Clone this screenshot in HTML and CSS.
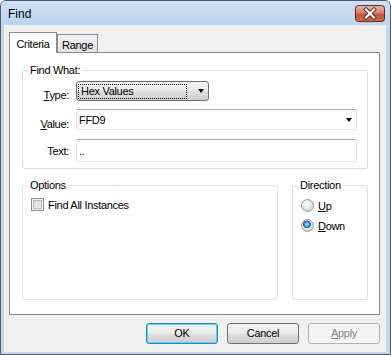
FILE: index.html
```html
<!DOCTYPE html>
<html>
<head>
<meta charset="utf-8">
<link rel="stylesheet" href="styles.css">
</head>
<body>
<div class="window">
  <div class="titlebar">
    <span class="title">Find</span>
    <span class="close">
      <svg width="30" height="17" viewBox="0 0 30 17">
        <defs>
          <linearGradient id="cg" x1="0" y1="0" x2="0" y2="1">
            <stop offset="0" stop-color="#eab2a4"/>
            <stop offset="0.45" stop-color="#d7826d"/>
            <stop offset="0.55" stop-color="#c8553c"/>
            <stop offset="1" stop-color="#cf6a47"/>
          </linearGradient>
        </defs>
        <rect x="0.5" y="0.5" width="29" height="16" rx="3" ry="3" fill="url(#cg)" stroke="#5e2b25"/>
        <path d="M11 4.5 L19 12.5 M19 4.5 L11 12.5" stroke="#4a2a28" stroke-width="4" stroke-linecap="square"/>
        <path d="M11 4.5 L19 12.5 M19 4.5 L11 12.5" stroke="#ffffff" stroke-width="2.2" stroke-linecap="square"/>
      </svg>
    </span>
  </div>
  <div class="client">
    <div class="tabs">
      <div class="tab active">Criteria</div>
      <div class="tab">Range</div>
    </div>
    <div class="panel">
      <fieldset class="group findwhat">
        <legend>Find What:</legend>
        <div class="form">
          <label class="row-type"><u>T</u>ype:</label>
          <div class="combo dropdown"><span class="focus">Hex Values</span><span class="arrow"></span></div>
          <label class="row-value"><u>V</u>alue:</label>
          <div class="combo edit"><span class="val">FFD9</span><span class="arrow"></span></div>
          <label class="row-text">Text:</label>
          <div class="textbox"><span class="val">..</span></div>
        </div>
      </fieldset>
      <div class="lower">
        <fieldset class="group options">
          <legend>Options</legend>
          <div class="check"><span class="box"></span><span>Find All Instances</span></div>
        </fieldset>
        <fieldset class="group direction">
          <legend>Direction</legend>
          <div class="radio"><span class="dot"></span><span><u>U</u>p</span></div>
          <div class="radio"><span class="dot on"></span><span><u>D</u>own</span></div>
        </fieldset>
      </div>
    </div>
    <div class="buttons">
      <div class="btn default">OK</div>
      <div class="btn">Cancel</div>
      <div class="btn disabled"><u>A</u>pply</div>
    </div>
  </div>
</div>
</body>
</html>
```
FILE: styles.css
```css
html, body {
  margin: 0;
  padding: 0;
  background: #ffffff;
}
body {
  font-family: "Liberation Sans", Arial, sans-serif;
  font-size: 11px;
  color: #000;
}
.window {
  width: 391px;
  height: 355px;
  box-sizing: border-box;
  border: 1px solid #4d5b6c;
  border-radius: 6px 6px 0 0;
  background: #c2d6ec;
  display: flex;
  flex-direction: column;
}
.titlebar {
  height: 24px;
  display: flex;
  align-items: flex-start;
  background: linear-gradient(#cfe0f3, #bcd3ec);
  border-radius: 5px 5px 0 0;
}
.title {
  font-size: 12px;
  line-height: 24px;
  padding-left: 7px;
  padding-top: 1px;
  flex: 1;
}
.close {
  display: block;
  margin-top: 4px;
  margin-right: 5px;
  width: 30px;
  height: 17px;
}
.close svg {
  display: block;
}
.client {
  flex: 1;
  margin: 0 4px 2px 3px;
  background: #f0f0f0;
  padding: 7px 6px 0 5px;
  display: flex;
  flex-direction: column;
  letter-spacing: -0.3px;
}
.tabs {
  display: flex;
  align-items: flex-end;
  height: 21px;
  margin-bottom: -1px;
  position: relative;
  z-index: 1;
}
.tab {
  box-sizing: border-box;
  border: 1px solid #898c95;
  border-bottom: none;
  text-align: center;
}
.tab.active {
  width: 48px;
  height: 21px;
  background: #fff;
  line-height: 20px;
  padding-top: 1px;
}
.tab:not(.active) {
  width: 41px;
  height: 18px;
  line-height: 18px;
  padding-top: 1px;
  background: linear-gradient(#f2f2f2, #e3e3e3);
  border-bottom: 1px solid #898c95;
  height: 19px;
}
.panel {
  height: 263px;
  box-sizing: border-box;
  border: 1px solid #898c95;
  background: #fff;
  padding: 11px 11px 0 12px;
  display: flex;
  flex-direction: column;
}
.group {
  margin: 0;
  padding: 0;
  border: 1px solid #d5dfe5;
  border-radius: 3px;
  min-width: 0;
}
.group legend {
  margin-left: 5px;
  padding: 0 2px;
  line-height: 13px;
}
.findwhat {
  height: 105px;
  box-sizing: border-box;
}
.form {
  display: grid;
  grid-template-columns: 46px 1fr;
  column-gap: 7px;
  padding: 4px 10px 0 0;
  align-items: center;
}
.form label {
  text-align: right;
}
.form label u, .radio u, .btn u {
  text-decoration: underline;
}
.combo, .textbox {
  box-sizing: border-box;
  position: relative;
  display: flex;
  align-items: center;
}
.dropdown {
  width: 133px;
  height: 20px;
  border: 1px solid #707070;
  border-radius: 3px;
  background: linear-gradient(#f2f2f2 0%, #ebebeb 45%, #dddddd 55%, #cfcfcf 100%);
  padding: 1px;
  margin-bottom: 8px;
}
.focus {
  box-sizing: border-box;
  width: 109px;
  height: 15px;
  border: 1px dotted #000;
  line-height: 13px;
  padding-left: 2px;
}
.arrow {
  display: block;
  width: 0;
  height: 0;
  border-left: 3.5px solid transparent;
  border-right: 3.5px solid transparent;
  border-top: 4px solid #000;
  margin-left: auto;
  margin-right: 3px;
}
.edit, .textbox {
  border: 1px solid;
  border-color: #abadb3 #dbdfe6 #e3e9ef #e2e3ea;
  border-radius: 2px;
  background: #fff;
}
.edit {
  height: 21px;
  margin-bottom: 9px;
}
.edit .arrow {
  margin-right: 4px;
}
.val {
  padding-left: 2px;
}
.textbox {
  height: 23px;
}
.lower {
  display: flex;
  gap: 14px;
  margin-top: 10px;
  height: 121px;
}
.options {
  width: 256px;
  box-sizing: border-box;
}
.direction {
  flex: 1;
  box-sizing: border-box;
}
.check {
  display: flex;
  align-items: center;
  gap: 4px;
  margin: 6px 0 0 8px;
  height: 13px;
}
.box {
  width: 13px;
  height: 13px;
  box-sizing: border-box;
  border: 1px solid #8f8f8f;
  background: #f4f4f4;
  box-shadow: inset 0 0 0 1px #f4f4f4, inset 0 0 0 2px #b8bcc2;
  background-image: linear-gradient(135deg, #cfd3d8, #f6f6f6);
  background-origin: border-box;
}
.radio {
  display: flex;
  align-items: center;
  gap: 4px;
  margin-left: 8px;
  height: 13px;
}
.direction .radio:first-of-type {
  margin-top: 7px;
}
.direction .radio + .radio {
  margin-top: 7px;
}
.dot {
  width: 13px;
  height: 13px;
  box-sizing: border-box;
  border-radius: 50%;
  border: 1px solid #9a9a9a;
  background: radial-gradient(circle at 40% 35%, #ffffff 0%, #e8e8e8 45%, #c8c8c8 100%);
}
.dot.on {
  background:
    radial-gradient(circle at 45% 40%, #a8e0ff 0%, #3a9be6 25%, #1c5fa8 42%, transparent 46%),
    radial-gradient(circle at 40% 35%, #ffffff 0%, #e8e8e8 50%, #c8c8c8 100%);
}
.buttons {
  display: flex;
  justify-content: flex-end;
  gap: 9px;
  margin-top: 8px;
}
.btn {
  box-sizing: border-box;
  width: 72px;
  height: 21px;
  border: 1px solid #707070;
  border-radius: 3px;
  background: linear-gradient(#f2f2f2 0%, #ebebeb 45%, #dddddd 55%, #cfcfcf 100%);
  text-align: center;
  line-height: 19px;
}
.btn.default {
  border-color: #3c7fb1;
  box-shadow: inset 0 0 0 1px #48d8fb;
}
.btn.disabled {
  border-color: #adb2b5;
  background: #f4f4f4;
  color: #838383;
}
```
